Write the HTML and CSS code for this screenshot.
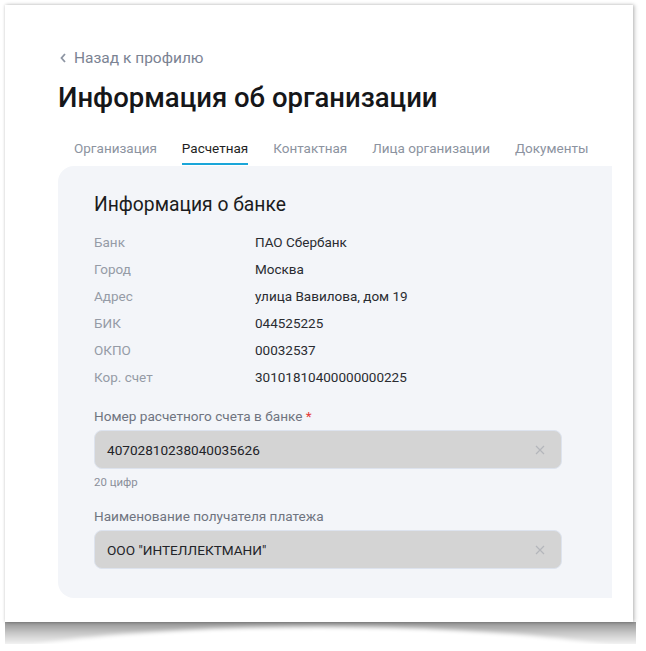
FILE: index.html
```html
<!DOCTYPE html>
<html lang="ru">
<head>
<meta charset="utf-8">
<link rel="stylesheet" href="styles.css">
</head>
<body>
<div class="frame">
<div class="paper">
  <div class="page">
    <a class="back"><svg class="chev" width="8" height="10" viewBox="0 0 8 10"><path d="M6 1 L2.5 5 L6 9" fill="none" stroke="#8d95a3" stroke-width="1.8"/></svg><span>Назад к профилю</span></a>
    <h1 class="title">Информация об организации</h1>
    <nav class="tabs">
      <span class="tab">Организация</span>
      <span class="tab active">Расчетная</span>
      <span class="tab">Контактная</span>
      <span class="tab">Лица организации</span>
      <span class="tab">Документы</span>
    </nav>
    <section class="panel">
      <h2 class="panel-title">Информация о банке</h2>
      <div class="info">
        <div class="row"><span class="lbl">Банк</span><span class="val">ПАО Сбербанк</span></div>
        <div class="row"><span class="lbl">Город</span><span class="val">Москва</span></div>
        <div class="row"><span class="lbl">Адрес</span><span class="val">улица Вавилова, дом 19</span></div>
        <div class="row"><span class="lbl">БИК</span><span class="val">044525225</span></div>
        <div class="row"><span class="lbl">ОКПО</span><span class="val">00032537</span></div>
        <div class="row"><span class="lbl">Кор. счет</span><span class="val">30101810400000000225</span></div>
      </div>
      <div class="field">
        <div class="field-label">Номер расчетного счета в банке <span class="req">*</span></div>
        <div class="input"><span>40702810238040035626</span><svg class="clear" width="10" height="10" viewBox="0 0 10 10"><path d="M1 1 L9 9 M9 1 L1 9" stroke="#b4b6bb" stroke-width="1.2"/></svg></div>
        <div class="hint">20 цифр</div>
      </div>
      <div class="field second">
        <div class="field-label">Наименование получателя платежа</div>
        <div class="input"><span>ООО "ИНТЕЛЛЕКТМАНИ"</span><svg class="clear" width="10" height="10" viewBox="0 0 10 10"><path d="M1 1 L9 9 M9 1 L1 9" stroke="#b4b6bb" stroke-width="1.2"/></svg></div>
      </div>
    </section>
  </div>
</div>
</div>
</body>
</html>
```

FILE: styles.css
```css
html, body {
  margin: 0;
  padding: 0;
  background: #ffffff;
  overflow: hidden;
}
body {
  font-family: Roboto, "Liberation Sans", sans-serif;
  color: #26282d;
}
.frame {
  width: 646px;
  height: 651px;
  overflow: hidden;
  padding: 5px 0 0 5px;
  box-sizing: border-box;
}
.paper {
  position: relative;
  width: 628px;
  height: 617px;
  background: #fff;
  box-shadow: 0 0 3px rgba(0,0,0,0.18), 2px 0 4px rgba(0,0,0,0.18);
}
.paper::before {
  content: "";
  position: absolute;
  left: 0;
  right: -3px;
  top: 100%;
  height: 22px;
  background: linear-gradient(to bottom, rgba(0,0,0,0.42), rgba(0,0,0,0.22) 50%, rgba(0,0,0,0.05));
  filter: blur(0.6px);
}
.paper::after {
  content: "";
  position: absolute;
  left: -40px;
  right: -40px;
  top: calc(100% + 5px);
  height: 90px;
  border-radius: 50%;
  background: #fff;
  filter: blur(2px);
}
.page {
  height: 100%;
  overflow: hidden;
  padding: 43px 0 0 53px;
  box-sizing: border-box;
}
.back {
  display: flex;
  align-items: center;
  gap: 7px;
  height: 20px;
  font-size: 15.5px;
  color: #7b8393;
  margin-left: 1px;
}
.title {
  margin: 13px 0 0 0;
  font-size: 27.5px;
  line-height: 34px;
  font-weight: 500;
  color: #151619;
}
.tabs {
  display: flex;
  gap: 25px;
  margin: 23px 0 0 16px;
  font-size: 13.5px;
}
.tab {
  line-height: 20px;
  padding-bottom: 5px;
  border-bottom: 2px solid transparent;
  color: #8c93a0;
}
.tab.active {
  color: #1e1f23;
  border-bottom-color: #1aa6d9;
}
.panel {
  margin-top: 1px;
  width: 554px;
  background: #f3f5f9;
  border-radius: 16px 0 0 16px;
  padding: 26px 0 29px 36px;
  box-sizing: border-box;
}
.panel-title {
  margin: 0;
  font-size: 19.3px;
  line-height: 26px;
  font-weight: 400;
  color: #1b1c20;
}
.info {
  margin-top: 10px;
  display: flex;
  flex-direction: column;
}
.row {
  display: grid;
  grid-template-columns: 161px 1fr;
  height: 27px;
  align-items: center;
  font-size: 13.5px;
}
.lbl { color: #959ba6; }
.val { color: #2a2c31; }
.field { margin-top: 16px; }
.field-label {
  font-size: 13.6px;
  line-height: 20px;
  color: #6f7480;
}
.req { color: #e53935; }
.input {
  margin-top: 4px;
  width: 468px;
  height: 39px;
  box-sizing: border-box;
  background: #d4d4d4;
  border: 1px solid #dde3ee;
  border-radius: 8px;
  display: flex;
  align-items: center;
  justify-content: space-between;
  padding: 0 16px 0 12px;
  font-size: 13.6px;
  color: #222328;
}
.hint {
  margin-top: 5px;
  font-size: 11.4px;
  line-height: 16px;
  color: #8a8f99;
}
.field.second { margin-top: 16px; }
```
